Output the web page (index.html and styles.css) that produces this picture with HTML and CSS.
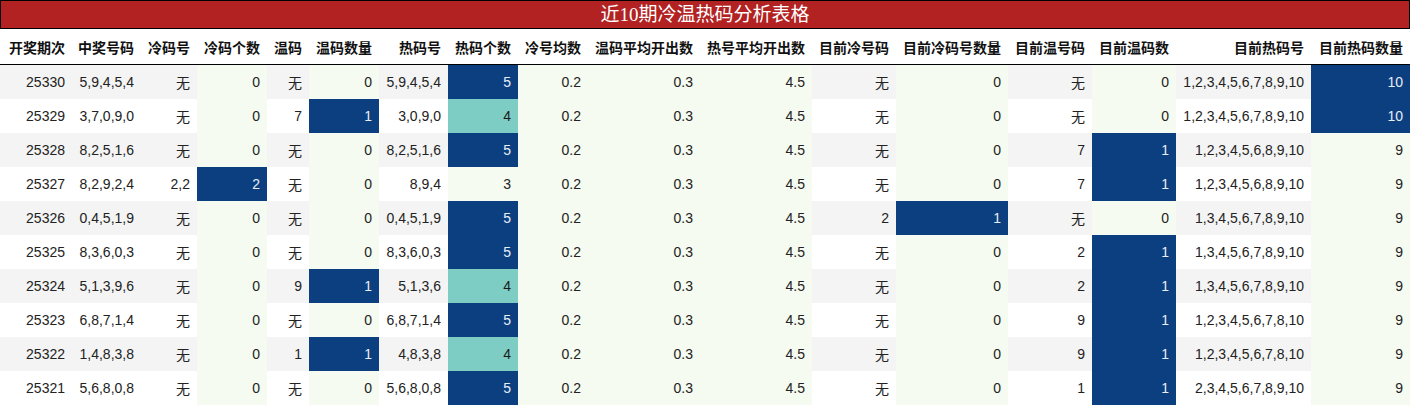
FILE: index.html
```html
<!DOCTYPE html>
<html lang="zh">
<head>
<meta charset="utf-8">
<title>近10期冷温热码分析表格</title>
<link rel="stylesheet" href="styles.css">
</head>
<body>
<div class="title">近10期冷温热码分析表格</div>
<table class="grid">
<colgroup>
<col style="width:72px"><col style="width:69px"><col style="width:56px"><col style="width:70px"><col style="width:42px"><col style="width:70px"><col style="width:69px"><col style="width:70px"><col style="width:70px"><col style="width:112px"><col style="width:112px"><col style="width:84px"><col style="width:112px"><col style="width:84px"><col style="width:84px"><col style="width:135px"><col style="width:99px">
</colgroup>
<thead>
<tr><th>开奖期次</th><th>中奖号码</th><th>冷码号</th><th>冷码个数</th><th>温码</th><th>温码数量</th><th>热码号</th><th>热码个数</th><th>冷号均数</th><th>温码平均开出数</th><th>热号平均开出数</th><th>目前冷号码</th><th>目前冷码号数量</th><th>目前温号码</th><th>目前温码数</th><th>目前热码号</th><th>目前热码数量</th></tr>
</thead>
<tbody>
<tr><td>25330</td><td>5,9,4,5,4</td><td>无</td><td class="g">0</td><td>无</td><td class="g">0</td><td>5,9,4,5,4</td><td class="b">5</td><td class="g">0.2</td><td class="g">0.3</td><td class="g">4.5</td><td>无</td><td class="g">0</td><td>无</td><td class="g">0</td><td>1,2,3,4,5,6,7,8,9,10</td><td class="b">10</td></tr>
<tr><td>25329</td><td>3,7,0,9,0</td><td>无</td><td class="g">0</td><td>7</td><td class="b">1</td><td>3,0,9,0</td><td class="t">4</td><td class="g">0.2</td><td class="g">0.3</td><td class="g">4.5</td><td>无</td><td class="g">0</td><td>无</td><td class="g">0</td><td>1,2,3,4,5,6,7,8,9,10</td><td class="b">10</td></tr>
<tr><td>25328</td><td>8,2,5,1,6</td><td>无</td><td class="g">0</td><td>无</td><td class="g">0</td><td>8,2,5,1,6</td><td class="b">5</td><td class="g">0.2</td><td class="g">0.3</td><td class="g">4.5</td><td>无</td><td class="g">0</td><td>7</td><td class="b">1</td><td>1,2,3,4,5,6,8,9,10</td><td class="g">9</td></tr>
<tr><td>25327</td><td>8,2,9,2,4</td><td>2,2</td><td class="b">2</td><td>无</td><td class="g">0</td><td>8,9,4</td><td class="g">3</td><td class="g">0.2</td><td class="g">0.3</td><td class="g">4.5</td><td>无</td><td class="g">0</td><td>7</td><td class="b">1</td><td>1,2,3,4,5,6,8,9,10</td><td class="g">9</td></tr>
<tr><td>25326</td><td>0,4,5,1,9</td><td>无</td><td class="g">0</td><td>无</td><td class="g">0</td><td>0,4,5,1,9</td><td class="b">5</td><td class="g">0.2</td><td class="g">0.3</td><td class="g">4.5</td><td>2</td><td class="b">1</td><td>无</td><td class="g">0</td><td>1,3,4,5,6,7,8,9,10</td><td class="g">9</td></tr>
<tr><td>25325</td><td>8,3,6,0,3</td><td>无</td><td class="g">0</td><td>无</td><td class="g">0</td><td>8,3,6,0,3</td><td class="b">5</td><td class="g">0.2</td><td class="g">0.3</td><td class="g">4.5</td><td>无</td><td class="g">0</td><td>2</td><td class="b">1</td><td>1,3,4,5,6,7,8,9,10</td><td class="g">9</td></tr>
<tr><td>25324</td><td>5,1,3,9,6</td><td>无</td><td class="g">0</td><td>9</td><td class="b">1</td><td>5,1,3,6</td><td class="t">4</td><td class="g">0.2</td><td class="g">0.3</td><td class="g">4.5</td><td>无</td><td class="g">0</td><td>2</td><td class="b">1</td><td>1,3,4,5,6,7,8,9,10</td><td class="g">9</td></tr>
<tr><td>25323</td><td>6,8,7,1,4</td><td>无</td><td class="g">0</td><td>无</td><td class="g">0</td><td>6,8,7,1,4</td><td class="b">5</td><td class="g">0.2</td><td class="g">0.3</td><td class="g">4.5</td><td>无</td><td class="g">0</td><td>9</td><td class="b">1</td><td>1,2,3,4,5,6,7,8,10</td><td class="g">9</td></tr>
<tr><td>25322</td><td>1,4,8,3,8</td><td>无</td><td class="g">0</td><td>1</td><td class="b">1</td><td>4,8,3,8</td><td class="t">4</td><td class="g">0.2</td><td class="g">0.3</td><td class="g">4.5</td><td>无</td><td class="g">0</td><td>9</td><td class="b">1</td><td>1,2,3,4,5,6,7,8,10</td><td class="g">9</td></tr>
<tr><td>25321</td><td>5,6,8,0,8</td><td>无</td><td class="g">0</td><td>无</td><td class="g">0</td><td>5,6,8,0,8</td><td class="b">5</td><td class="g">0.2</td><td class="g">0.3</td><td class="g">4.5</td><td>无</td><td class="g">0</td><td>1</td><td class="b">1</td><td>2,3,4,5,6,7,8,9,10</td><td class="g">9</td></tr>
</tbody>
</table>
</body>
</html>
```

FILE: styles.css
```css
html, body {
  margin: 0;
  padding: 0;
  background: #ffffff;
}

body {
  width: 1410px;
  font-family: "Liberation Sans", "Noto Sans CJK SC", sans-serif;
  color: #222222;
}

.title {
  box-sizing: border-box;
  height: 29px;
  border: 1px solid #000000;
  background: #b22222;
  color: #ffffff;
  text-align: center;
  font-family: "Liberation Serif", "Noto Sans CJK SC", serif;
  font-size: 19px;
  line-height: 27px;
}

.grid {
  width: 1410px;
  table-layout: fixed;
  border-collapse: collapse;
  border-spacing: 0;
  font-size: 14px;
}

.grid th,
.grid td {
  padding: 0 7px 0 0;
  text-align: right;
  white-space: nowrap;
  overflow: hidden;
}

.grid th {
  height: 35px;
  font-weight: bold;
  color: #111111;
  background: #ffffff;
  border-bottom: 1px solid #000000;
}

.grid td {
  height: 34px;
}

.grid tbody tr:nth-child(odd) td {
  background: #f4f4f4;
}

.grid tbody tr:nth-child(even) td {
  background: #ffffff;
}

.grid tbody tr td.g {
  background: #f5fbf0;
}

.grid tbody tr td.b {
  background: #0b3f80;
  color: #e8eef6;
}

.grid tbody tr td.t {
  background: #7ecdc5;
  color: #1a1a1a;
}
```
